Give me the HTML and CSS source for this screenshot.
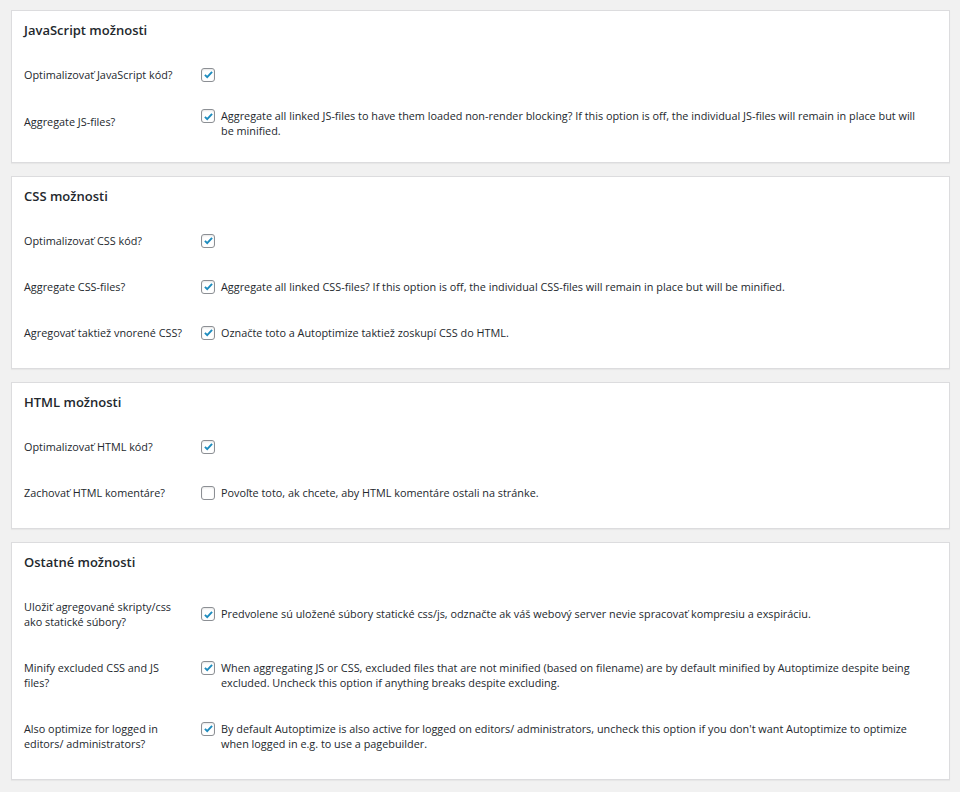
FILE: index.html
```html
<!DOCTYPE html>
<html lang="sk">
<head>
  <meta charset="UTF-8">
  <meta name="viewport" content="width=device-width, initial-scale=1.0">
  <title>Autoptimize</title>
  <link rel="stylesheet" href="styles.css">
</head>
<body>
  <div class="wrap">

    <div class="postbox">
      <h2>JavaScript možnosti</h2>
      <div class="row">
        <div class="label">Optimalizovať JavaScript kód?</div>
        <div class="field"><span class="cb on"><svg viewBox="0 0 20 20"><path d="M4.5 10.5l3.5 3.5 7.5-8"/></svg></span></div>
      </div>
      <div class="row tight">
        <div class="label">Aggregate JS-files?</div>
        <div class="field"><span class="cb on"><svg viewBox="0 0 20 20"><path d="M4.5 10.5l3.5 3.5 7.5-8"/></svg></span><span class="desc">Aggregate all linked JS-files to have them loaded non-render blocking? If this option is off, the individual JS-files will remain in place but will be minified.</span></div>
      </div>
    </div>

    <div class="postbox">
      <h2>CSS možnosti</h2>
      <div class="row">
        <div class="label">Optimalizovať CSS kód?</div>
        <div class="field"><span class="cb on"><svg viewBox="0 0 20 20"><path d="M4.5 10.5l3.5 3.5 7.5-8"/></svg></span></div>
      </div>
      <div class="row">
        <div class="label">Aggregate CSS-files?</div>
        <div class="field"><span class="cb on"><svg viewBox="0 0 20 20"><path d="M4.5 10.5l3.5 3.5 7.5-8"/></svg></span><span class="desc">Aggregate all linked CSS-files? If this option is off, the individual CSS-files will remain in place but will be minified.</span></div>
      </div>
      <div class="row">
        <div class="label">Agregovať taktiež vnorené CSS?</div>
        <div class="field"><span class="cb on"><svg viewBox="0 0 20 20"><path d="M4.5 10.5l3.5 3.5 7.5-8"/></svg></span><span class="desc">Označte toto a Autoptimize taktiež zoskupí CSS do HTML.</span></div>
      </div>
    </div>

    <div class="postbox">
      <h2>HTML možnosti</h2>
      <div class="row">
        <div class="label">Optimalizovať HTML kód?</div>
        <div class="field"><span class="cb on"><svg viewBox="0 0 20 20"><path d="M4.5 10.5l3.5 3.5 7.5-8"/></svg></span></div>
      </div>
      <div class="row">
        <div class="label">Zachovať HTML komentáre?</div>
        <div class="field"><span class="cb"></span><span class="desc">Povoľte toto, ak chcete, aby HTML komentáre ostali na stránke.</span></div>
      </div>
    </div>

    <div class="postbox">
      <h2>Ostatné možnosti</h2>
      <div class="row">
        <div class="label">Uložiť agregované skripty/css ako statické súbory?</div>
        <div class="field"><span class="cb on"><svg viewBox="0 0 20 20"><path d="M4.5 10.5l3.5 3.5 7.5-8"/></svg></span><span class="desc">Predvolene sú uložené súbory statické css/js, odznačte ak váš webový server nevie spracovať kompresiu a exspiráciu.</span></div>
      </div>
      <div class="row">
        <div class="label">Minify excluded CSS and JS files?</div>
        <div class="field"><span class="cb on"><svg viewBox="0 0 20 20"><path d="M4.5 10.5l3.5 3.5 7.5-8"/></svg></span><span class="desc">When aggregating JS or CSS, excluded files that are not minified (based on filename) are by default minified by Autoptimize despite being excluded. Uncheck this option if anything breaks despite excluding.</span></div>
      </div>
      <div class="row">
        <div class="label">Also optimize for logged in editors/ administrators?</div>
        <div class="field"><span class="cb on"><svg viewBox="0 0 20 20"><path d="M4.5 10.5l3.5 3.5 7.5-8"/></svg></span><span class="desc">By default Autoptimize is also active for logged on editors/ administrators, uncheck this option if you don't want Autoptimize to optimize when logged in e.g. to use a pagebuilder.</span></div>
      </div>
    </div>

  </div>
</body>
</html>
```

FILE: styles.css
```css
* {
  margin: 0;
  padding: 0;
  box-sizing: border-box;
}

body {
  font-family: "Open Sans", "Noto Sans", sans-serif;
  font-size: 10.85px;
  line-height: 15px;
  color: #23282d;
  background: #f1f1f1;
}

.wrap {
  padding: 10px 10px 0 11px;
}

.postbox {
  background: #fff;
  border: 1px solid #dcdcde;
  box-shadow: 0 1px 1px rgba(0, 0, 0, 0.04);
  padding: 9px 12px 13px;
  margin-bottom: 13px;
}

h2 {
  font-size: 13px;
  font-weight: 600;
  line-height: 20px;
  margin-bottom: 11px;
}

.row {
  display: grid;
  grid-template-columns: 177px 1fr;
  align-items: center;
  padding: 15.5px 0;
}

.row.tight {
  padding: 11px 0;
}

.row.tight .label {
  margin-top: -4px;
}

.label {
  padding-right: 17px;
}

.field {
  display: flex;
  align-items: flex-start;
  gap: 6px;
  padding-right: 12px;
}

.cb {
  flex: none;
  width: 14px;
  height: 14px;
  margin-top: 1px;
  border: 1px solid #8c8f94;
  border-radius: 3px;
  background: #fff;
  box-shadow: inset 0 1px 2px rgba(0, 0, 0, 0.1);
}

.cb svg {
  display: block;
  width: 13px;
  height: 13px;
  margin: -0.5px 0 0 -0.5px;
  fill: none;
  stroke: #1e8cbe;
  stroke-width: 3;
}
```
